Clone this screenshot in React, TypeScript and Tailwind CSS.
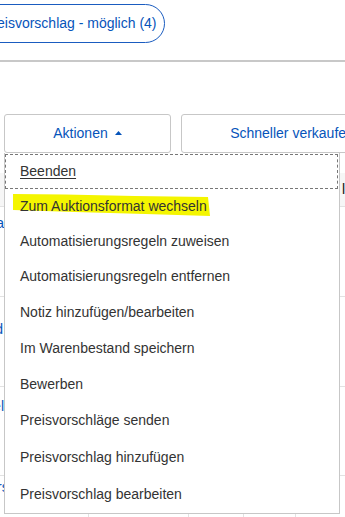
import React from 'react';

const menuItems = [
  { label: 'Zum Auktionsformat wechseln', h: 'h-[35px]' },
  { label: 'Automatisierungsregeln zuweisen', h: 'h-[35px]' },
  { label: 'Automatisierungsregeln entfernen', h: 'h-[35px]' },
  { label: 'Notiz hinzufügen/bearbeiten', h: 'h-[36px]' },
  { label: 'Im Warenbestand speichern', h: 'h-[36px]' },
  { label: 'Bewerben', h: 'h-[36px]' },
  { label: 'Preisvorschläge senden', h: 'h-[37px]' },
  { label: 'Preisvorschlag hinzufügen', h: 'h-[37px]' },
  { label: 'Preisvorschlag bearbeiten', h: 'h-[37px]' },
];

export default function App() {
  return (
    <div className="relative w-[345px] h-[517px] overflow-hidden bg-white font-['Liberation_Sans',Arial,sans-serif] text-[14px]">
      {/* Filter pill */}
      <div className="h-[60px] pt-[4px] flex items-start">
        <div className="ml-[-34px] h-[39px] shrink-0 flex items-center rounded-full border border-[#1a5cc0] pl-[16px] pr-[7px] text-[#0654ba] whitespace-nowrap">
          Preisvorschlag - möglich (4)
        </div>
      </div>
      <div className="h-[2px] bg-[#c8c8c8]" />

      {/* Toolbar */}
      <div className="mt-[52px] h-[39px] flex">
        <button className="ml-[4px] w-[167px] shrink-0 border border-[#c7c7c7] rounded-[3px] flex items-center justify-center gap-[7px] text-[#0654ba]">
          <span>Aktionen</span>
          <svg width="7" height="4" viewBox="0 0 7 4" className="mt-[-1px]">
            <polygon points="0,4 3.5,0 7,4" fill="#0654ba" />
          </svg>
        </button>
        <button className="ml-[10px] w-[222px] shrink-0 border border-[#c7c7c7] rounded-[3px] flex items-center justify-center text-[#0654ba] whitespace-nowrap">
          Schneller verkaufen
        </button>
      </div>

      {/* Listings table (mostly covered by the menu) */}
      <div className="mt-[20px]">
        <div className="h-[34px] bg-[#f6f6f6] border-b border-[#e2e2e2] flex items-center">
          <span className="ml-[342px] whitespace-nowrap text-[#111]">leistung</span>
        </div>
        <div className="h-[90px] border-b border-[#e2e2e2] flex">
          <div className="w-[4px] overflow-hidden flex justify-end pt-[6px] text-[#0654ba] whitespace-nowrap">Paula</div>
        </div>
        <div className="h-[90px] border-b border-[#e2e2e2] flex">
          <div className="w-[3px] overflow-hidden flex justify-end pt-[22px] text-[#0654ba] whitespace-nowrap">Sud</div>
        </div>
        <div className="h-[89px] border-b border-[#e2e2e2] flex">
          <div className="w-[4px] overflow-hidden flex justify-end pt-[9px] text-[#0654ba] whitespace-nowrap">Titel</div>
        </div>
        <div className="h-[60px] flex">
          <div className="w-[88px] shrink-0 overflow-hidden flex justify-start pt-[1px] text-[#0654ba] whitespace-nowrap">
            <span className="ml-[-20px]">Kurs</span>
          </div>
          <div className="w-[100px] shrink-0 border-l border-[#e2e2e2]" />
          <div className="w-[55px] shrink-0 border-l border-[#e2e2e2]" />
          <div className="w-[52px] shrink-0 border-l border-[#e2e2e2]" />
          <div className="w-[50px] shrink-0 border-l border-[#e2e2e2]" />
        </div>
      </div>

      {/* Open actions menu */}
      <div className="absolute left-[4px] top-[153px] w-[336px] bg-white border border-t-0 border-[#c7c7c7] text-[#333]">
        <div className="mt-[1px] mr-[1px] h-[35px] border border-dashed border-[#777] pl-[14px] flex items-center">
          <span className="underline underline-offset-2">Beenden</span>
        </div>
        {menuItems.map((item, i) => (
          <div key={item.label} className={`relative ${item.h} pl-[15px] flex items-center`}>
            {i === 0 && (
              <svg className="absolute left-0 top-0" width="215" height="36" viewBox="0 0 215 36">
                <polygon points="8,5 60,5.5 130,7 203,8 205,27 140,25 70,23 8,21" fill="#f4f500" />
              </svg>
            )}
            <span className="relative whitespace-nowrap">{item.label}</span>
          </div>
        ))}
      </div>
    </div>
  );
}
